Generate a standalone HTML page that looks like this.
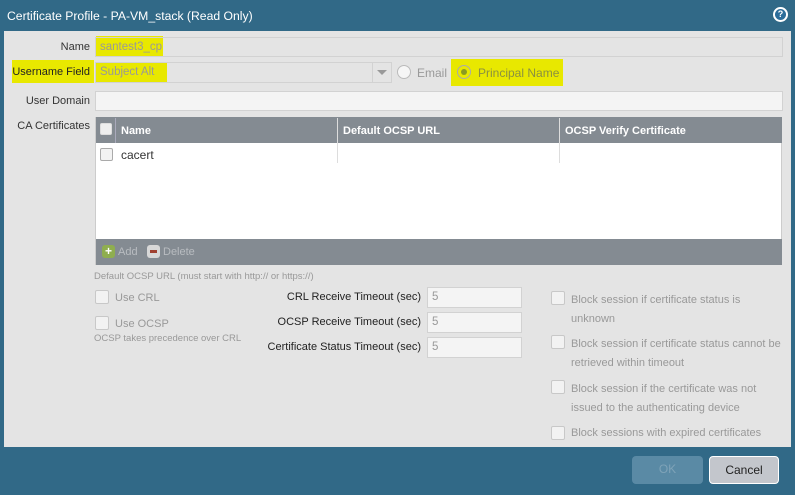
<!DOCTYPE html>
<html><head><style>
*{margin:0;padding:0;box-sizing:border-box}
body{width:795px;height:495px;background:#316987;font-family:"Liberation Sans",sans-serif;font-size:11px;position:relative;overflow:hidden}
.a{position:absolute}
.title{left:7px;top:9px;color:#fff;font-size:12.2px;font-family:"Liberation Sans",sans-serif}
.panel{left:4px;top:31px;width:787px;height:416px;background:#e4e4e4}
.inp{background:#f4f4f4;border:1px solid #d2d2d2;color:#999;padding-left:4px;line-height:19px;font-size:11.5px}
.lbl{color:#333;text-align:right;width:86px;left:4px}
.hl{background:#e8e800}
.cb{width:14px;height:14px;border:1px solid #c8c8c8;background:#f2f2f2;border-radius:2px}
.g{color:#999}
.btn{border-radius:4px;text-align:center;line-height:26px;font-size:12px}
</style></head><body>
<div class="a title">Certificate Profile - PA-VM_stack (Read Only)</div>
<div class="a" style="left:773px;top:7px;width:15px;height:15px;border-radius:50%;background:#fff;"><div style="position:absolute;left:2px;top:2px;width:11px;height:11px;border-radius:50%;background:#2c6d9a;color:#fff;font-size:9px;font-weight:bold;text-align:center;line-height:11px">?</div></div>
<div class="a panel"></div>

<div class="a hl" style="left:96px;top:36px;width:67px;height:20px"></div>
<div class="a hl" style="left:12px;top:60px;width:82px;height:23px"></div>
<div class="a hl" style="left:96px;top:62px;width:71px;height:21px"></div>
<div class="a hl" style="left:451px;top:59px;width:112px;height:27px"></div>
<div class="a hl" style="left:116px;top:144px;width:44px;height:22px"></div>

<div class="a lbl" style="top:41px">Name</div>
<div class="a inp" style="left:95px;top:37px;width:688px;height:20px;background:transparent">santest3_cp</div>
<div class="a lbl" style="top:66px;color:#222">Username Field</div>
<div class="a inp" style="left:95px;top:62px;width:297px;height:21px;background:transparent">Subject Alt</div>
<div class="a" style="left:372px;top:63px;width:1px;height:19px;background:#d2d2d2"></div>
<div class="a" style="left:377px;top:70px;width:0;height:0;border-left:5px solid transparent;border-right:5px solid transparent;border-top:5px solid #999"></div>
<div class="a" style="left:397px;top:65px;width:14px;height:14px;border-radius:50%;border:1px solid #bbb;background:#f6f6f6"></div>
<div class="a g" style="left:417px;top:66px;font-size:12px">Email</div>
<div class="a" style="left:457px;top:65px;width:14px;height:14px;border-radius:50%;border:1px solid #aaa"><div style="position:absolute;left:3px;top:3px;width:6px;height:6px;border-radius:50%;background:#8a9a20"></div></div>
<div class="a" style="left:478px;top:66px;font-size:12px;color:#8a9040">Principal Name</div>

<div class="a lbl" style="top:95px">User Domain</div>
<div class="a inp" style="left:95px;top:91px;width:688px;height:20px"></div>

<div class="a lbl" style="top:120px">CA Certificates</div>
<div class="a" style="left:95px;top:117px;width:687px;height:148px;background:#fff;border:1px solid #ccc"></div>
<div class="a" style="left:96px;top:117px;width:686px;height:26px;background:#848b92"></div>
<div class="a" style="left:115px;top:118px;width:1px;height:25px;background:#aab"></div>
<div class="a" style="left:337px;top:118px;width:1px;height:45px;background:#ddd"></div>
<div class="a" style="left:559px;top:118px;width:1px;height:45px;background:#ddd"></div>
<div class="a cb" style="left:100px;top:123px;width:12px;height:12px;border-color:#ddd;background:#eee"></div>
<div class="a" style="left:121px;top:125px;color:#fff;font-weight:bold;font-size:11px">Name</div>
<div class="a" style="left:343px;top:125px;color:#fff;font-weight:bold;font-size:11px">Default OCSP URL</div>
<div class="a" style="left:565px;top:125px;color:#fff;font-weight:bold;font-size:11px">OCSP Verify Certificate</div>
<div class="a cb" style="left:100px;top:148px;width:13px;height:13px;border-color:#aaa"></div>
<div class="a" style="left:121px;top:148px;font-size:12px;color:#333">cacert</div>
<div class="a" style="left:96px;top:239px;width:686px;height:26px;background:#848b92"></div>
<div class="a" style="left:102px;top:245px;width:13px;height:13px;border-radius:3px;background:#8fae4f;color:#fff;font-weight:bold;text-align:center;line-height:13px;font-size:12px">+</div>
<div class="a" style="left:118px;top:246px;color:#b8bcc0;font-size:11px">Add</div>
<div class="a" style="left:147px;top:245px;width:13px;height:13px;border-radius:3px;background:#d8d8d8"><div style="position:absolute;left:3px;top:5px;width:7px;height:3px;background:#a04030"></div></div>
<div class="a" style="left:163px;top:246px;color:#b8bcc0;font-size:11px">Delete</div>

<div class="a g" style="left:94px;top:271px;font-size:9.5px">Default OCSP URL (must start with http:// or https://)</div>
<div class="a cb" style="left:95px;top:290px"></div>
<div class="a g" style="left:115px;top:292px">Use CRL</div>
<div class="a cb" style="left:95px;top:316px"></div>
<div class="a g" style="left:115px;top:318px">Use OCSP</div>
<div class="a g" style="left:94px;top:333px;font-size:9.5px">OCSP takes precedence over CRL</div>

<div class="a" style="right:374px;top:291px;color:#222">CRL Receive Timeout (sec)</div>
<div class="a" style="right:374px;top:316px;color:#222">OCSP Receive Timeout (sec)</div>
<div class="a" style="right:374px;top:341px;color:#222">Certificate Status Timeout (sec)</div>
<div class="a inp" style="left:427px;top:287px;width:95px;height:21px">5</div>
<div class="a inp" style="left:427px;top:312px;width:95px;height:21px">5</div>
<div class="a inp" style="left:427px;top:337px;width:95px;height:21px">5</div>

<div class="a cb" style="left:551px;top:291px"></div>
<div class="a g" style="left:571px;top:291px;line-height:19px;white-space:nowrap">Block session if certificate status is<br>unknown</div>
<div class="a cb" style="left:551px;top:335px"></div>
<div class="a g" style="left:571px;top:335px;line-height:19px;white-space:nowrap">Block session if certificate status cannot be<br>retrieved within timeout</div>
<div class="a cb" style="left:551px;top:380px"></div>
<div class="a g" style="left:571px;top:380px;line-height:19px;white-space:nowrap">Block session if the certificate was not<br>issued to the authenticating device</div>
<div class="a cb" style="left:551px;top:426px"></div>
<div class="a g" style="left:571px;top:427px;white-space:nowrap">Block sessions with expired certificates</div>

<div class="a btn" style="left:632px;top:456px;width:71px;height:28px;background:#5a8aa5;color:#7fa3b8">OK</div>
<div class="a btn" style="left:709px;top:456px;width:70px;height:28px;background:#c3c6cc;border:1px solid #fff;color:#222">Cancel</div>
</body></html>
